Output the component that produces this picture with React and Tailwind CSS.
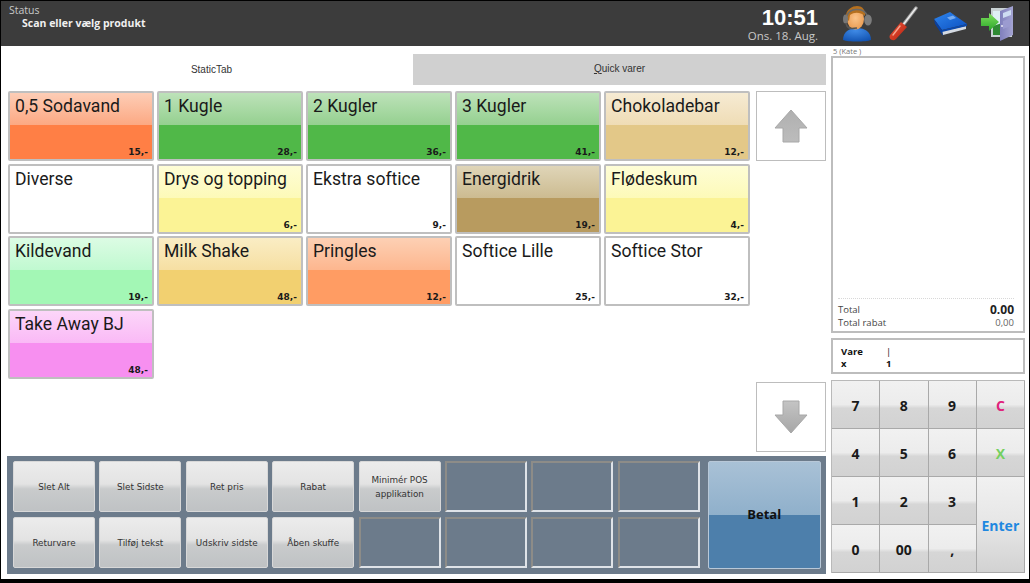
const bg = {
  orange: "bg-[linear-gradient(to_bottom,#fdcdb6_0%,#fca882_49%,#ff7f45_49%,#ff7f45_100%)]",
  green: "bg-[linear-gradient(to_bottom,#bde2b9_0%,#94d08f_49%,#50b848_49%,#50b848_100%)]",
  choco: "bg-[linear-gradient(to_bottom,#f6ebd3_0%,#efdcb5_49%,#e3c888_49%,#e3c888_100%)]",
  white: "bg-white",
  yellow: "bg-[linear-gradient(to_bottom,#fefdd6_0%,#fdfab8_49%,#fbf395_49%,#fbf395_100%)]",
  energi: "bg-[linear-gradient(to_bottom,#dfd5b8_0%,#ccbb90_49%,#b89b5f_49%,#b89b5f_100%)]",
  mint: "bg-[linear-gradient(to_bottom,#dcfce4_0%,#c0f9d0_49%,#a3f7b5_49%,#a3f7b5_100%)]",
  milk: "bg-[linear-gradient(to_bottom,#faedc4_0%,#f6dfa2_49%,#f2d070_49%,#f2d070_100%)]",
  pringles: "bg-[linear-gradient(to_bottom,#fdd0b4_0%,#fdb68e_49%,#ff9c63_49%,#ff9c63_100%)]",
  pink: "bg-[linear-gradient(to_bottom,#fcd6f9_0%,#fab9f6_49%,#f78ff0_49%,#f78ff0_100%)]",
};

const products = [
  ["0,5 Sodavand", "15,-", "orange"],
  ["1 Kugle", "28,-", "green"],
  ["2 Kugler", "36,-", "green"],
  ["3 Kugler", "41,-", "green"],
  ["Chokoladebar", "12,-", "choco"],
  ["Diverse", "", "white"],
  ["Drys og topping", "6,-", "yellow"],
  ["Ekstra softice", "9,-", "white"],
  ["Energidrik", "19,-", "energi"],
  ["Flødeskum", "4,-", "yellow"],
  ["Kildevand", "19,-", "mint"],
  ["Milk Shake", "48,-", "milk"],
  ["Pringles", "12,-", "pringles"],
  ["Softice Lille", "25,-", "white"],
  ["Softice Stor", "32,-", "white"],
  ["Take Away BJ", "48,-", "pink"],
];

const actions = [
  "Slet Alt", "Slet Sidste", "Ret pris", "Rabat", "Minimér POS applikation", "", "", "",
  "Returvare", "Tilføj tekst", "Udskriv sidste", "Åben skuffe", "", "", "", "",
];

const greyBtn = "bg-[linear-gradient(to_bottom,#ececec_0%,#e3e3e3_45%,#c9cbcc_55%,#bfc2c4_100%)]";

function Product({ name, price, color }) {
  return (
    <div className={`relative h-[70px] border-2 border-[#bfbfbf] rounded-[2px] ${bg[color]}`}>
      <div className="pl-[5px] pt-[1px] text-[17.6px] leading-[24px] text-[#1a1a1a] whitespace-nowrap font-['Roboto',sans-serif]">{name}</div>
      <div className="absolute right-[4px] bottom-[1px] text-[9px] font-bold leading-[12px] text-[#1a1a1a] font-['DejaVu_Sans',sans-serif]">{price}</div>
    </div>
  );
}

function Arrow({ down }) {
  const id = down ? "arrow-down" : "arrow-up";
  return (
    <div className="w-[70px] h-[70px] bg-white border border-[#bdbdbd] flex items-center justify-center">
      <svg width="34" height="34" viewBox="0 0 34 34" className={down ? "rotate-180" : ""}>
        <defs>
          <linearGradient id={id} x1="0" y1="0" x2="0" y2="1">
            <stop offset="0" stopColor={down ? "#a6a6a6" : "#b0b0b0"} />
            <stop offset="1" stopColor={down ? "#c4c4c4" : "#bcbcbc"} />
          </linearGradient>
        </defs>
        <path d="M17 1 L33 19 H25 V33 H9 V19 H1 Z" fill={`url(#${id})`} stroke="#a8a8a8" strokeWidth="1" strokeLinejoin="round" />
      </svg>
    </div>
  );
}

function Agent() {
  return (
    <svg width="30" height="36" viewBox="0 0 30 36">
      <defs>
        <radialGradient id="agent-body" cx="0.45" cy="0.2" r="0.9">
          <stop offset="0" stopColor="#3f8ae6" />
          <stop offset="1" stopColor="#0f4fae" />
        </radialGradient>
        <radialGradient id="agent-face" cx="0.5" cy="0.45" r="0.6">
          <stop offset="0" stopColor="#fbc48a" />
          <stop offset="1" stopColor="#e99a50" />
        </radialGradient>
      </defs>
      <path d="M1 34 C1 26 7 22 15 22 C23 22 29 26 29 34 C24 36 6 36 1 34 Z" fill="url(#agent-body)" />
      <ellipse cx="13.5" cy="13" rx="8.5" ry="10.5" fill="url(#agent-face)" />
      <path d="M4 12 C3 3 11 0 15 0 C21 0 24 5 23 10 C20 7 13 5 8 9 L7 15 Z" fill="#b5701f" />
      <path d="M5 10 C7 2 21 1 25 9" fill="none" stroke="#6a6a6a" strokeWidth="1.5" />
      <ellipse cx="26" cy="14" rx="3.8" ry="5.5" fill="#7d7d7d" />
      <ellipse cx="3.5" cy="13" rx="2.5" ry="4.5" fill="#777" />
      <path d="M4 17 C5 23 9 23 15 22" fill="none" stroke="#555" strokeWidth="1.6" />
    </svg>
  );
}

function Screwdriver() {
  return (
    <svg width="30" height="36" viewBox="0 0 30 36">
      <defs>
        <linearGradient id="driver-handle" x1="0" y1="0" x2="1" y2="1">
          <stop offset="0" stopColor="#f0563a" />
          <stop offset="1" stopColor="#b3200f" />
        </linearGradient>
      </defs>
      <path d="M28 2 L15 19" stroke="#9a9a9a" strokeWidth="3.4" strokeLinecap="round" />
      <path d="M28 2 L15 19" stroke="#eeeeee" strokeWidth="1.3" strokeLinecap="round" />
      <path d="M13 16 L19 21 L8 33 C5 36 0 33 2 29 Z" fill="url(#driver-handle)" />
      <path d="M12 20 L5 29" stroke="#f6a690" strokeWidth="1.4" strokeLinecap="round" />
    </svg>
  );
}

function Book() {
  return (
    <svg width="35" height="25" viewBox="0 0 35 25">
      <defs>
        <linearGradient id="book-cover" x1="0" y1="0" x2="1" y2="1">
          <stop offset="0" stopColor="#2f86ee" />
          <stop offset="1" stopColor="#0b4fc0" />
        </linearGradient>
      </defs>
      <path d="M9 20 L33 15 L33 18 L10 24 Z" fill="#d4dae2" />
      <path d="M1 8 L17 1 L34 13 L9 19 Z" fill="url(#book-cover)" />
      <path d="M1 8 L9 19 L10 25 L2 13 Z" fill="#0a3f9e" />
      <path d="M9 19 L34 13 L34 15 L9 21 Z" fill="#0b48ac" />
      <path d="M14 6.5 L20 4.5 L23 7 L17 9 Z" fill="#76abf0" />
    </svg>
  );
}

function Door() {
  return (
    <svg width="34" height="35" viewBox="0 0 34 35">
      <defs>
        <linearGradient id="door-panel" x1="0" y1="0" x2="1" y2="0">
          <stop offset="0" stopColor="#7f7fbc" />
          <stop offset="1" stopColor="#a4a4d2" />
        </linearGradient>
        <linearGradient id="door-arrow" x1="0" y1="0" x2="0" y2="1">
          <stop offset="0" stopColor="#7fe05c" />
          <stop offset="1" stopColor="#2aa52a" />
        </linearGradient>
      </defs>
      <path d="M11 2 H32 V31 H11 Z" fill="#c9d2d4" />
      <rect x="13" y="5" width="9" height="24" fill="#dff0f4" />
      <path d="M13 20 L22 17 V29 H13 Z" fill="#2f8a34" />
      <path d="M20 5 L33 0 V29 L20 35 Z" fill="url(#door-panel)" />
      <path d="M23 7 L31 4 V9 L23 12 Z" fill="#cddcf2" />
      <path d="M23 15 L31 12 V20 L23 23 Z" fill="#9b9bd0" />
      <circle cx="22" cy="20" r="1" fill="#e8e8f6" />
      <path d="M1 12 H9 V7 L19 16 L9 25 V20 H1 Z" fill="url(#door-arrow)" />
    </svg>
  );
}

const dark = "text-[#1a1a1a]";
const keys = [
  ["7", dark], ["8", dark], ["9", dark], ["C", "text-[#e0247c]"],
  ["4", dark], ["5", dark], ["6", dark], ["X", "text-[#74d060]"],
  ["1", dark], ["2", dark], ["3", dark],
];

const keyBg = "bg-[linear-gradient(to_bottom,#f1f1f1_0%,#ececec_50%,#d6d6d6_58%,#d2d2d2_100%)]";

function Key({ label, color, tall }) {
  return (
    <div className={`flex items-center justify-center pt-[2px] text-[14px] font-bold border-r border-b border-[#a9a9a9] font-['Open_Sans',sans-serif] ${color} ${tall ? "row-span-2 bg-[linear-gradient(to_bottom,#f1f1f1_0%,#e6e6e6_50%,#d2d2d2_100%)]" : keyBg}`}>
      {label}
    </div>
  );
}

export default function App() {
  return (
    <div className="w-[1030px] h-[583px] bg-white overflow-hidden flex flex-col border-l border-r border-black font-['Open_Sans',sans-serif]">
      <header className="h-[46px] shrink-0 bg-[#3c3c3c] border-t border-black flex text-white">
        <div className="flex-1 pl-[8px] pt-[3px]">
          <div className="text-[10.5px] leading-[13px] text-[#c8c8c8]">Status</div>
          <div className="pl-[13px] text-[10.5px] leading-[13px] font-bold text-[#f0f0f0]">Scan eller vælg produkt</div>
        </div>
        <div className="w-[90px] flex flex-col items-end pt-[5px] mr-[16px]">
          <div className="text-[22px] leading-[24px] font-bold whitespace-nowrap font-['Liberation_Sans',sans-serif]">10:51</div>
          <div className="text-[11.5px] leading-[12px] text-[#c8c8c8] whitespace-nowrap">Ons. 18. Aug.</div>
        </div>
        <div className="flex items-center pl-[8px] w-[195px]">
          <Agent />
          <div className="ml-[16px]"><Screwdriver /></div>
          <div className="ml-[15px]"><Book /></div>
          <div className="ml-[12px]"><Door /></div>
        </div>
      </header>

      <div className="flex-1 flex min-h-0">
        <div className="w-[825px] shrink-0 flex flex-col">
          <div className="flex h-[31px] mt-[8px] shrink-0 text-[10px] text-[#333] font-['Liberation_Sans',sans-serif]">
            <div className="w-[412px] pl-[9px] flex items-center justify-center">StaticTab</div>
            <div className="flex-1 bg-[#d0d0d0] pb-[3px] flex items-center justify-center"><span><span className="underline">Q</span>uick varer</span></div>
          </div>
          <div className="flex flex-1 mt-[6px] pl-[7px] min-h-0">
            <div className="w-[742px] grid grid-cols-[repeat(5,146px)] auto-rows-[70px] gap-x-[3px] gap-y-[2.67px] content-start">
              {products.map(p => <Product key={p[0]} name={p[0]} price={p[1]} color={p[2]} />)}
            </div>
            <div className="w-[70px] ml-[6px] flex flex-col justify-between h-[361px]">
              <Arrow />
              <Arrow down />
            </div>
          </div>
          <div className="h-[118px] shrink-0 mb-[5px] ml-[6px] bg-[#6c7b8b] py-[5px] pl-[6px] flex">
            <div className="grid grid-cols-[repeat(8,82px)] grid-rows-[repeat(2,51px)] gap-x-[4.4px] gap-y-[5px]">
              {actions.map((a, i) => a ? (
                <div key={i} className={`flex items-center justify-center text-center rounded-[2px] text-[8.8px] leading-[14px] text-[#333] px-[6px] border border-[#d8d8d8] font-['DejaVu_Sans',sans-serif] ${greyBtn}`}>{a}</div>
              ) : (
                <div key={i} className="border-t-2 border-l-2 border-b-2 border-r-2 border-t-[#8d8c88] border-l-[#8d8c88] border-b-[#dfe3e8] border-r-[#dfe3e8]" />
              ))}
            </div>
            <div className="w-[113px] ml-[8px] flex items-center justify-center border border-[#b8c8d8] rounded-[2px] text-[13px] font-bold text-[#111] font-['Open_Sans',sans-serif] bg-[linear-gradient(to_bottom,#a9c1d6_0%,#8fb0cb_50%,#4d7fab_50%,#4d7fab_100%)]">Betal</div>
          </div>
        </div>

        <div className="flex-1 pl-[5px] pr-[4px] flex flex-col">
          <div className="text-[7.5px] leading-[10px] text-[#777] h-[10px] pl-[2px]">5 (Kate )</div>
          <div className="h-[277px] border-2 border-[#bdbdbd] flex flex-col justify-end pl-[5px] pr-[9px] pb-[1px]">
            <div className="border-t border-dotted border-[#d8d8d8] h-[5px]" />
            <div className="flex items-center justify-between h-[14px] text-[9.5px] text-[#444]">
              <span>Total</span><span className="text-[12px] font-bold text-[#222]">0.00</span>
            </div>
            <div className="flex items-center justify-between h-[13px] text-[9.5px] text-[#444]">
              <span>Total rabat</span><span className="text-[#666]">0,00</span>
            </div>
          </div>
          <div className="mt-[5px] h-[36px] border-2 border-[#bdbdbd] pl-[8px] pr-[6px] pt-[6px] text-[9.5px] leading-[12px] font-bold text-[#111] grid grid-cols-[45px_1fr] content-start">
            <span>Vare</span><span className="font-normal">|</span>
            <span>x</span><span>1</span>
          </div>
          <div className="mt-[6px] h-[193px] grid grid-cols-4 grid-rows-4 border-l border-t border-[#b9b9b9]">
            {keys.map(([k, c]) => <Key key={k} label={k} color={c} />)}
            <Key label="Enter" color="text-[#1f88e0]" tall />
            <Key label="0" color={dark} />
            <Key label="00" color={dark} />
            <Key label="," color={dark} />
          </div>
        </div>
      </div>
      <div className="h-[4px] shrink-0 bg-black" />
    </div>
  );
}
